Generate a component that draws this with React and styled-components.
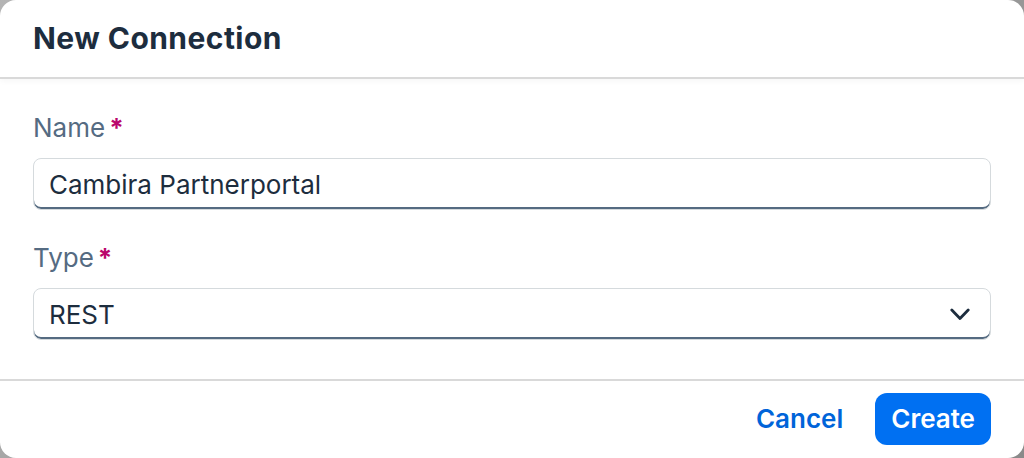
import React from 'react';
import styled, { createGlobalStyle } from 'styled-components';

const GlobalStyle = createGlobalStyle`
    html, body {
        margin: 0;
        padding: 0;
        height: 100%;
        background: linear-gradient(135deg, #b4b4b4 0%, #8a8a8a 100%);
    }
    #root {
        height: 100%;
    }
    * {
        box-sizing: border-box;
    }
`;

const Dialog = styled.div`
    width: 1024px;
    height: 458px;
    background: #fff;
    border-radius: 16px;
    overflow: hidden;
    display: flex;
    flex-direction: column;
    font-family: Inter, "Noto Sans", sans-serif;
    color: #1d2d3e;
`;

const Header = styled.header`
    height: 79px;
    flex: none;
    display: flex;
    align-items: center;
    padding: 0 33px 2px;
    border-bottom: 2px solid #d9d9d9;
    box-shadow: 0 2px 6px rgba(0, 0, 0, 0.04);
    position: relative;
`;

const Title = styled.h1`
    margin: 0;
    font-size: 30px;
    font-weight: 700;
    color: #1d2d3e;
    letter-spacing: 0.45px;
`;

const Body = styled.div`
    flex: 1;
    padding: 32px 33px 0;
    display: flex;
    flex-direction: column;
`;

const Field = styled.div`
    display: flex;
    flex-direction: column;
    margin-bottom: ${props => props.last ? '0' : '31px'};
`;

const Label = styled.label`
    font-size: 26px;
    line-height: 34px;
    color: #556b82;
    margin-bottom: 13px;
    display: flex;
    align-items: center;
`;

const Required = styled.span`
    color: #ba066c;
    font-weight: 700;
    margin-left: 4px;
`;

const InputBox = styled.div`
    height: 52px;
    border: 1.5px solid #d5dadd;
    border-radius: 8px;
    box-shadow: inset 0 -2px 0 #556b81;
    display: flex;
    align-items: center;
    padding: 0 20px 0 15px;
    font-size: 26px;
    color: #1d2d3e;
    background: #fff;
    justify-content: space-between;
`;

const Footer = styled.footer`
    height: 79px;
    flex: none;
    border-top: 2px solid #d9d9d9;
    display: flex;
    justify-content: flex-end;
    align-items: center;
    gap: 16px;
    padding: 0 33px 2px;
`;

const Button = styled.button`
    height: 52px;
    padding: 0 16px;
    border-radius: 12px;
    border: none;
    font-family: inherit;
    font-size: 26px;
    font-weight: 600;
    cursor: pointer;
    background: ${props => props.primary ? '#0070f2' : 'transparent'};
    color: ${props => props.primary ? '#fff' : '#0064d9'};
`;

function Chevron() {
    return (
        <svg width="20" height="13" viewBox="0 0 20 13" fill="none">
            <path d="M1.8 2 L10 10.5 L18.2 2" stroke="#1d2d3e" strokeWidth="2.8" strokeLinecap="round" strokeLinejoin="round" />
        </svg>
    );
}

export default function App() {
    return (
        <>
            <GlobalStyle />
            <Dialog>
                <Header>
                    <Title>New Connection</Title>
                </Header>
                <Body>
                    <Field>
                        <Label>Name<Required>*</Required></Label>
                        <InputBox>Cambira Partnerportal</InputBox>
                    </Field>
                    <Field last>
                        <Label>Type<Required>*</Required></Label>
                        <InputBox>
                            REST
                            <Chevron />
                        </InputBox>
                    </Field>
                </Body>
                <Footer>
                    <Button>Cancel</Button>
                    <Button primary>Create</Button>
                </Footer>
            </Dialog>
        </>
    );
}
